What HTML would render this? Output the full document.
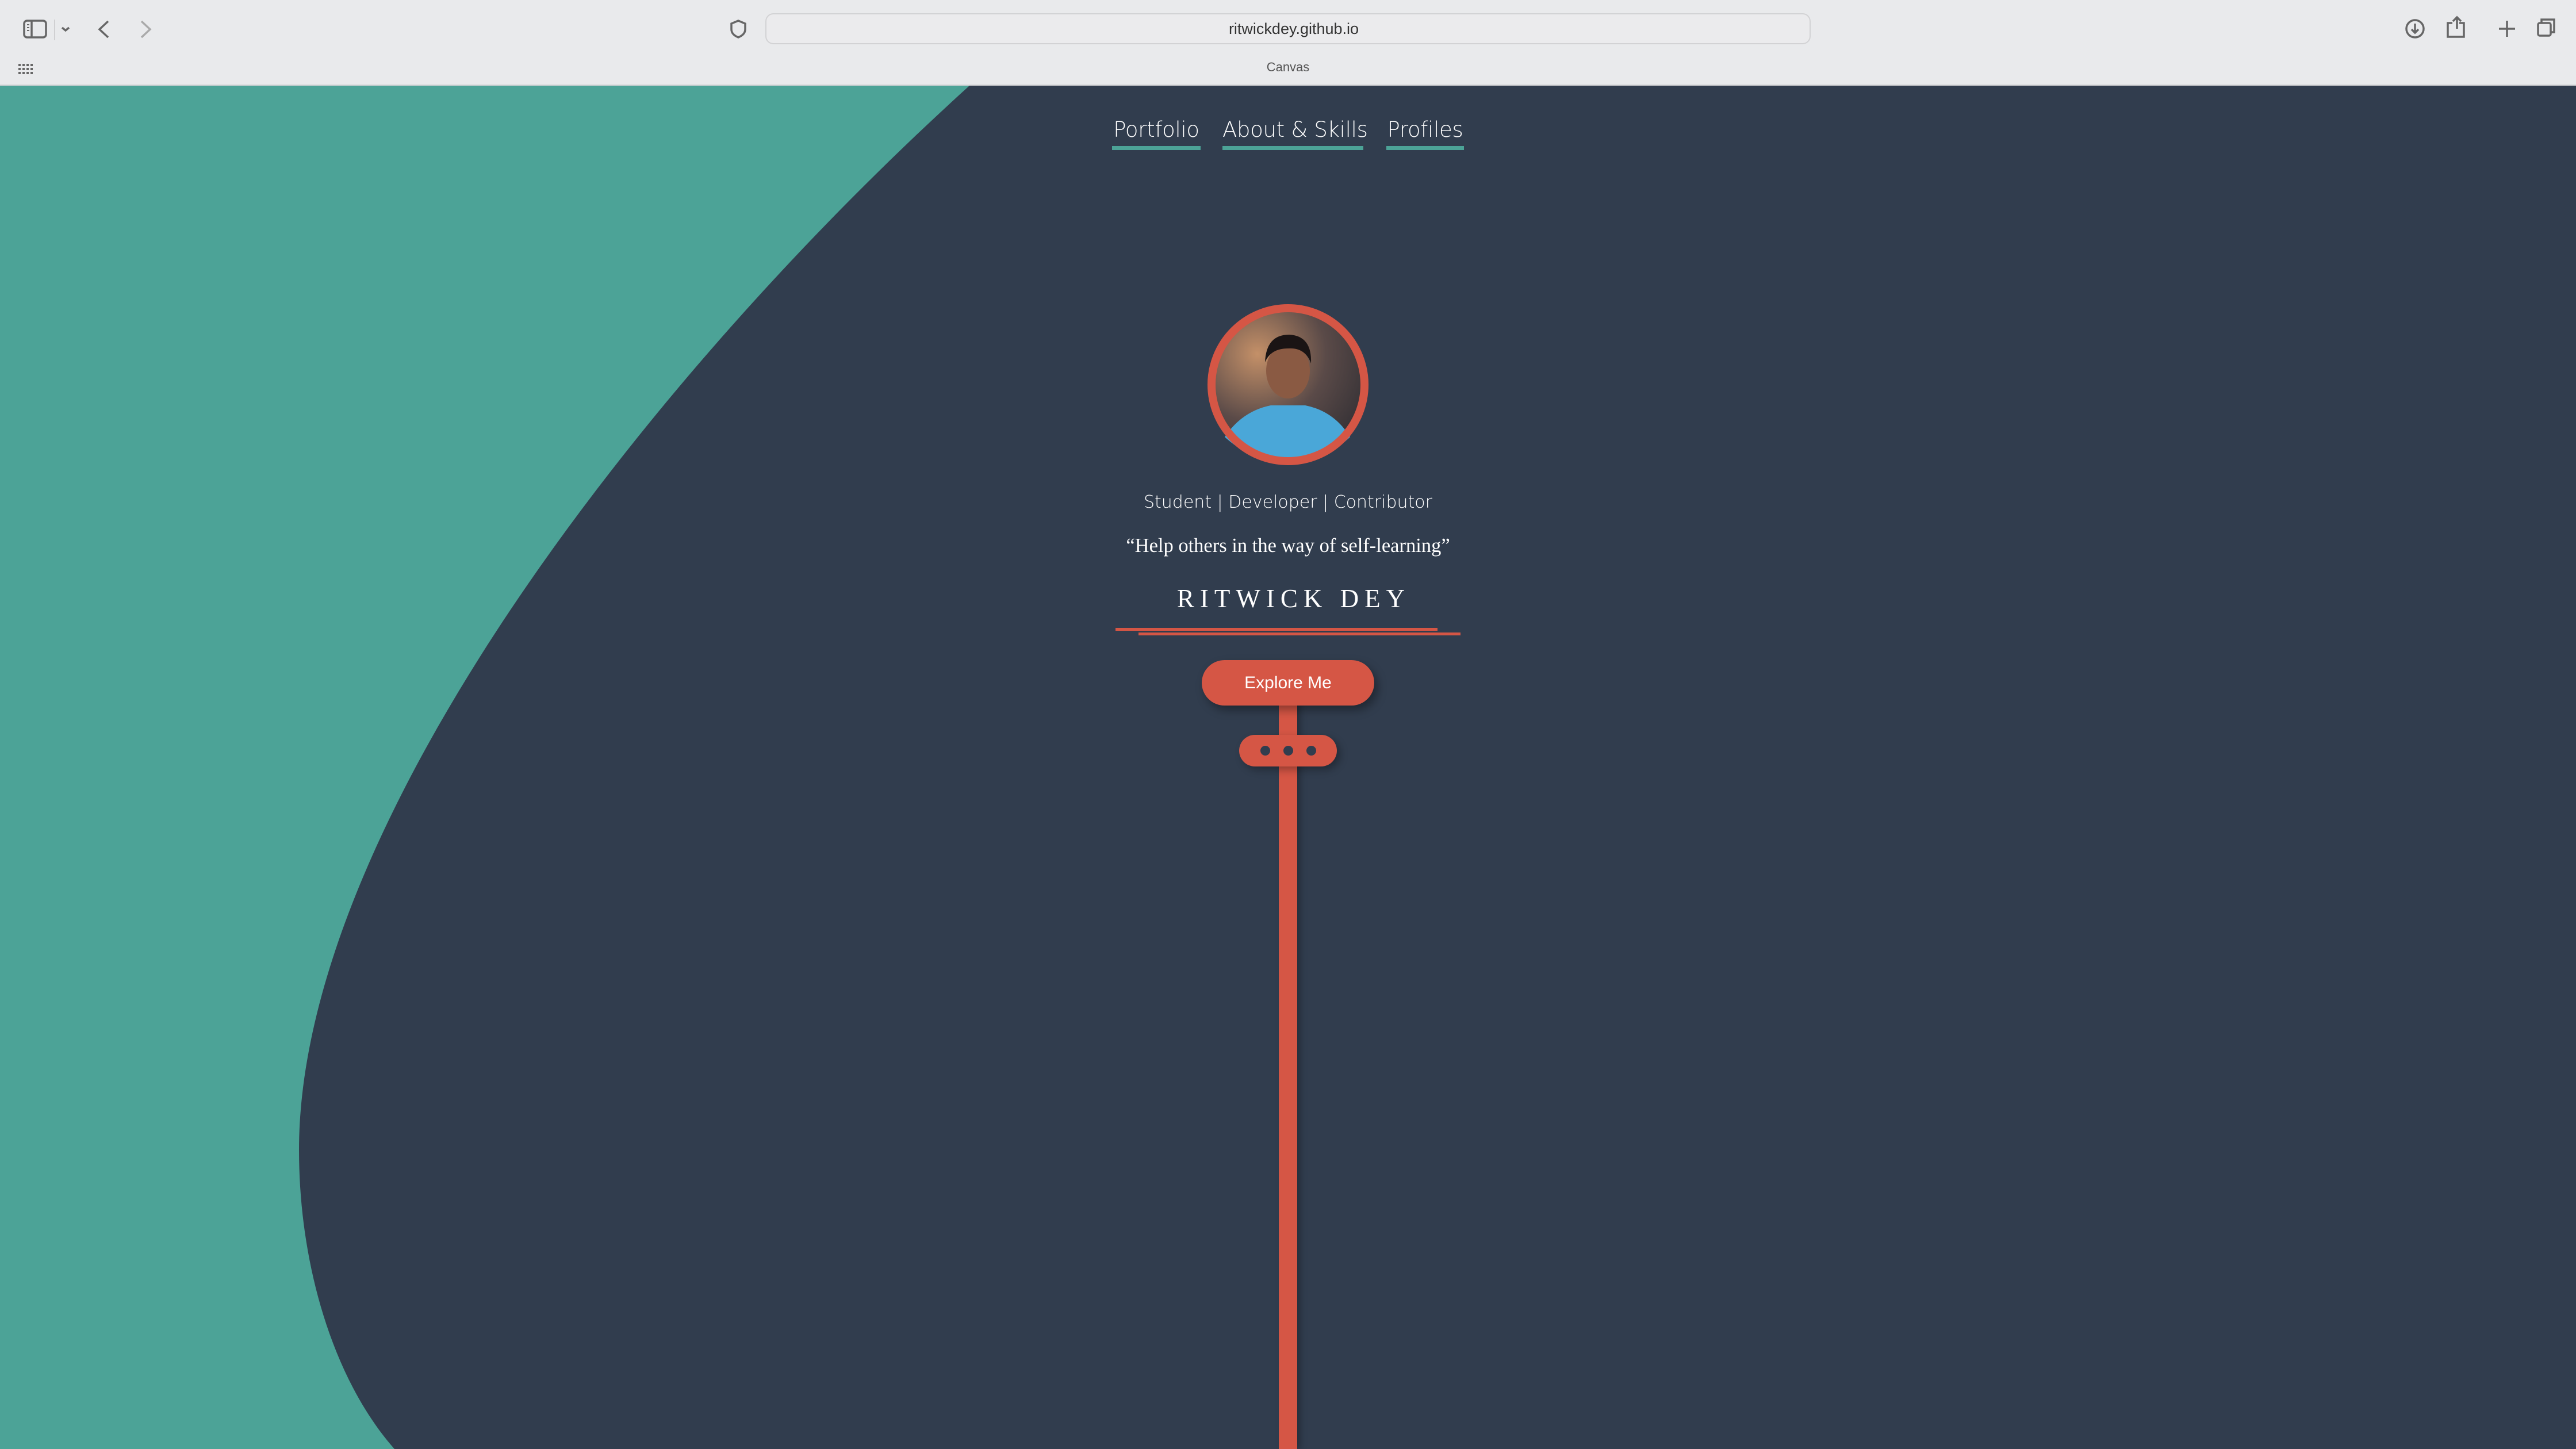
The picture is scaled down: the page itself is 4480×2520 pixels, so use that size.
<!DOCTYPE html>
<html><head><meta charset="utf-8"><style>
html,body{margin:0;padding:0;width:4480px;height:2520px;overflow:hidden;background:#313d4e;font-family:"Liberation Sans",sans-serif}
.chrome{position:absolute;left:0;top:0;width:4480px;height:149px;background:#e9eaec;border-bottom:2px solid #d4d4d6;box-sizing:border-box}
.addr{position:absolute;left:1331px;top:23px;width:1818px;height:54px;border:2px solid #d2d2d4;border-radius:14px;background:#ebebed;box-sizing:border-box;text-align:center;font-size:27px;line-height:50px;color:#333}
.tab{position:absolute;left:0;width:4480px;top:104px;text-align:center;font-size:22px;color:#555}
.nav{position:absolute;top:202px;font-family:"DejaVu Sans","Liberation Sans",sans-serif;font-size:37px;color:#fff;border-bottom:7px solid #4ca397;padding-bottom:4px;line-height:48px;font-weight:300;white-space:nowrap;text-align:center;letter-spacing:-0.3px}
.c{position:absolute;left:0;width:4480px;text-align:center;color:#fff;white-space:nowrap}
</style></head><body>
<svg style="position:absolute;left:0;top:0" width="4480" height="2520">
<path d="M0,149 L1686,149 C1100,680 520,1450 520,2000 C520,2200 580,2400 686,2520 L0,2520 Z" fill="#4ca397"/>
</svg>
<div class="chrome">
<svg width="4480" height="149" style="position:absolute;left:0;top:0" fill="none" stroke="#666" stroke-width="3.5">
<rect x="42" y="36" width="38" height="29" rx="5"/><line x1="55" y1="36" x2="55" y2="65"/>
<path d="M47,43 h4 M47,48 h4 M47,53 h4" stroke-width="2"/>
<line x1="95" y1="34" x2="95" y2="70" stroke="#d0d0d2" stroke-width="2"/>
<path d="M108,48 l6,5 6,-5"/><path d="M188,37 l-15,14 15,14"/><path d="M246,37 l15,14 -15,14" stroke="#aaa"/>
<path d="M1284,36 l-12,5 v10 q0,9 12,14 q12,-5 12,-14 v-10 z"/>
<circle cx="4200" cy="50" r="15"/><path d="M4200,41 v16 m-6,-6 l6,6 6,-6"/>
<path d="M4265,40 h-8 v24 h28 v-24 h-8 M4273,50 v-20 m-7,7 l7,-7 7,7"/>
<path d="M4346,50 h28 M4360,36 v28"/>
<rect x="4414" y="40" width="22" height="22" rx="3"/><path d="M4420,40 v-6 h22 v22 h-6"/>
<g fill="#666" stroke="none">
<rect x="32" y="111" width="4" height="4"/><rect x="39" y="111" width="4" height="4"/><rect x="46" y="111" width="4" height="4"/><rect x="53" y="111" width="4" height="4"/>
<rect x="32" y="118" width="4" height="4"/><rect x="39" y="118" width="4" height="4"/><rect x="46" y="118" width="4" height="4"/><rect x="53" y="118" width="4" height="4"/>
<rect x="32" y="125" width="4" height="4"/><rect x="39" y="125" width="4" height="4"/><rect x="46" y="125" width="4" height="4"/><rect x="53" y="125" width="4" height="4"/>
</g>
<rect x="2107" y="47" width="14" height="12" rx="2" fill="#888" stroke="none"/><path d="M2110,47 v-4 a4,4 0 0 1 8,0 v4" stroke="#888" stroke-width="2.5"/>
</svg>
<div class="addr"><span style="display:inline-block;width:20px"></span>ritwickdey.github.io</div>
<div class="tab">Canvas</div>
</div>
<div class="nav" style="left:1934px;width:154px">Portfolio</div>
<div class="nav" style="left:2126px;width:245px">About &amp; Skills</div>
<div class="nav" style="left:2411px;width:135px">Profiles</div>
<svg style="position:absolute;left:2090px;top:520px" width="300" height="300">
<defs><radialGradient id="bg" cx="0.3" cy="0.3" r="0.9"><stop offset="0" stop-color="#c49068"/><stop offset="0.5" stop-color="#5a4a48"/><stop offset="1" stop-color="#2a2a30"/></radialGradient></defs>
<circle cx="150" cy="149" r="133" fill="url(#bg)"/>
<path d="M40,240 Q70,195 120,185 L180,185 Q230,195 258,240 Q210,285 150,285 Q90,285 40,240Z" fill="#4aa7d8"/>
<ellipse cx="150" cy="125" rx="38" ry="48" fill="#8a5a43"/>
<path d="M110,110 Q112,62 152,62 Q192,64 190,112 Q180,84 150,86 Q120,86 110,110Z" fill="#1a1414"/>
<circle cx="150" cy="149" r="133" fill="none" stroke="#d55645" stroke-width="14"/>
</svg>
<div class="c" style="top:856px;font-family:'DejaVu Sans',sans-serif;font-size:30px;font-weight:300">Student | Developer | Contributor</div>
<div class="c" style="top:930px;font-family:'Liberation Serif',serif;font-size:34.5px">“Help others in the way of self-learning”</div>
<div class="c" style="top:1015px;font-family:'Liberation Serif',serif;font-size:45px;letter-spacing:10px;padding-left:10px">RITWICK DEY</div>
<div style="position:absolute;left:1940px;top:1092px;width:560px;height:5px;background:#d55645"></div>
<div style="position:absolute;left:1980px;top:1100px;width:560px;height:5px;background:#d55645"></div>
<div style="position:absolute;left:2224px;top:1200px;width:32px;height:1320px;background:#d55645;box-shadow:6px 0 10px rgba(0,0,0,0.25)"></div>
<div style="position:absolute;left:2090px;top:1148px;width:300px;height:79px;border-radius:40px;background:#d55645;color:#fff;text-align:center;line-height:79px;font-size:30px;box-shadow:6px 8px 16px rgba(0,0,0,0.35)">Explore Me</div>
<div style="position:absolute;left:2155px;top:1278px;width:170px;height:55px;border-radius:28px;background:#d55645;box-shadow:6px 6px 14px rgba(0,0,0,0.3)">
<div style="position:absolute;left:37px;top:19px;width:17px;height:17px;border-radius:50%;background:#313d4e"></div>
<div style="position:absolute;left:77px;top:19px;width:17px;height:17px;border-radius:50%;background:#313d4e"></div>
<div style="position:absolute;left:117px;top:19px;width:17px;height:17px;border-radius:50%;background:#313d4e"></div>
</div>
</body></html>
